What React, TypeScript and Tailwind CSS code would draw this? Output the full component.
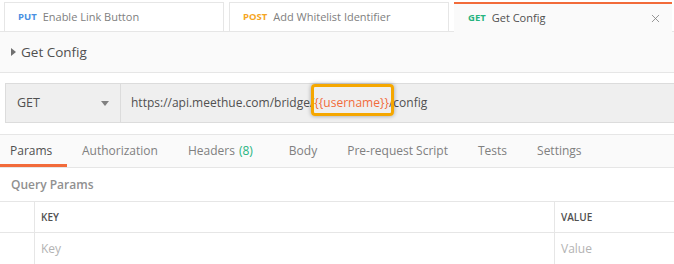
import { X } from "lucide-react";

const tabs = [
  { method: "PUT", color: "text-[#4a90e2]", name: "Enable Link Button" },
  { method: "POST", color: "text-[#f5a623]", name: "Add Whitelist Identifier" },
];

const reqTabs = ["Authorization", "Headers", "Body", "Pre-request Script", "Tests", "Settings"];

export default function App() {
  return (
    <div className="h-[264px] w-[674px] overflow-hidden bg-white font-['Open_Sans',sans-serif] text-[#505050]">
      {/* Tab bar */}
      <div className="flex h-[32px] items-end gap-[5px] border-b border-[#e6e6e6] pl-[4px]">
        {tabs.map((t) => (
          <div
            key={t.name}
            className="-mb-px flex h-[30px] w-[220px] items-center gap-[6px] border border-[#e6e6e6] bg-white px-[13px] text-[11px]"
          >
            <span className={`text-[9.5px] font-bold ${t.color}`}>{t.method}</span>
            <span className="text-[#808080]">{t.name}</span>
          </div>
        ))}
        <div className="-mb-px flex h-[30px] w-[218px] items-center gap-[6px] border-t-[2px] border-[#f26b3a] bg-[#fafafa] pl-[14px] pr-[10px] text-[11px]">
          <span className="text-[9.5px] font-bold text-[#26b47f]">GET</span>
          <span className="text-[#505050]">Get Config</span>
          <X className="ml-auto h-[13px] w-[13px] text-[#808080]" strokeWidth={1.5} />
        </div>
      </div>

      <div className="bg-[#fafafa]">
        {/* Title */}
        <div className="flex h-[41px] items-center gap-[5px] border-b border-[#e6e6e6] pl-[11px]">
          <svg width="5" height="8" viewBox="0 0 5 8" className="text-[#707070]">
            <path d="M0 0L5 4L0 8Z" fill="currentColor" />
          </svg>
          <span className="text-[13.5px] text-[#505050]">Get Config</span>
        </div>

        {/* URL bar */}
        <div className="flex border-b border-[#e6e6e6] bg-white pb-[11px] pl-[5px] pt-[10px]">
          <div className="flex h-[40px] flex-1 border border-r-0 border-[#dcdcdc] bg-[#efefef]">
            <div className="flex w-[115px] items-center justify-between border-r border-[#dcdcdc] pl-[11px] pr-[11px] text-[12.5px]">
              <span>GET</span>
              <svg width="8" height="5" viewBox="0 0 8 5" className="text-[#808080]">
                <path d="M0 0H8L4 5Z" fill="currentColor" />
              </svg>
            </div>
            <div className="flex items-center pl-[10px] text-[12px]">
              <span>https://api.meethue.com/bridge/</span>
              <span className="relative text-[#f26b3a]">
                {"{{username}}"}
                <span className="absolute -bottom-[4px] -left-[3px] -right-[5px] -top-[10px] rounded-[4px] border-[3px] border-[#f5a700] shadow-[0_0_4px_rgba(0,0,0,0.35)]" />
              </span>
              <span>/config</span>
            </div>
          </div>
        </div>

        {/* Request tabs */}
        <div className="flex h-[33px] items-stretch border-b border-[#e6e6e6] text-[12px]">
          <div className="flex w-[67px] items-center border-b-[3px] border-[#f26b3a] pl-[10px] pt-[3px] text-[#505050]">
            Params
          </div>
          {reqTabs.map((t) => (
            <div
              key={t}
              className={`flex items-center px-[15px] text-[#808080] ${t === "Body" ? "ml-[6px]" : ""}`}
            >
              {t}
              {t === "Headers" && <span className="ml-[4px] text-[#26b47f]">(8)</span>}
            </div>
          ))}
        </div>
      </div>

      {/* Query params */}
      <div className="bg-white">
        <div className="flex h-[33px] items-center pl-[11px] text-[12px] font-semibold text-[#909090]">
          Query Params
        </div>
        <div className="grid grid-cols-[35px_520px_1fr] border-t border-[#e6e6e6] text-[11px]">
          <div className="h-[31px] border-b border-r border-[#e6e6e6]" />
          <div className="flex h-[31px] items-center border-b border-r border-[#e6e6e6] pl-[6px] text-[10px] font-semibold text-[#505050]">
            KEY
          </div>
          <div className="flex h-[31px] items-center border-b border-[#e6e6e6] pl-[6px] text-[10px] font-semibold text-[#505050]">
            VALUE
          </div>
          <div className="h-[32px] border-b border-r border-[#e6e6e6]" />
          <div className="flex h-[32px] items-center border-b border-r border-[#e6e6e6] pl-[6px] text-[12px] text-[#b3b3b3]">
            Key
          </div>
          <div className="flex h-[32px] items-center border-b border-[#e6e6e6] pl-[6px] text-[12px] text-[#b3b3b3]">
            Value
          </div>
        </div>
      </div>
    </div>
  );
}
